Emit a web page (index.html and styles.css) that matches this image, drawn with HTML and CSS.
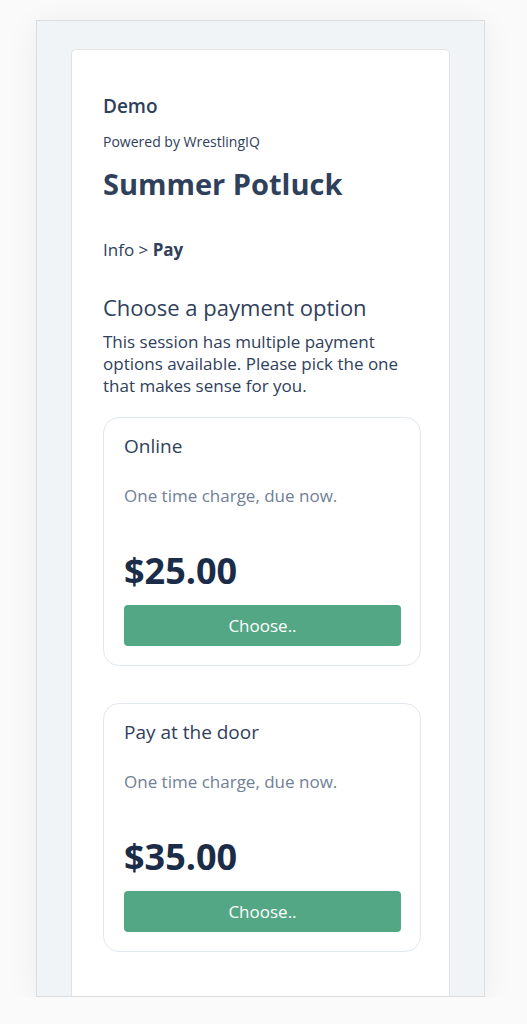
FILE: index.html
```html
<!DOCTYPE html>
<html lang="en">
<head>
  <meta charset="UTF-8">
  <meta name="viewport" content="width=device-width, initial-scale=1.0">
  <title>Summer Potluck - Pay</title>
  <link rel="stylesheet" href="styles.css">
</head>
<body>
  <div class="frame">
    <div class="page">
      <!-- Header -->
      <div class="org">Demo</div>
      <div class="powered">Powered by WrestlingIQ</div>
      <h1>Summer Potluck</h1>

      <div class="crumbs">Info &gt; <strong>Pay</strong></div>

      <h2>Choose a payment option</h2>
      <p class="intro">This session has multiple payment options available. Please pick the one that makes sense for you.</p>

      <!-- Payment options -->
      <div class="options">
        <div class="option">
          <div class="option-name">Online</div>
          <div class="option-desc">One time charge, due now.</div>
          <div class="price">$25.00</div>
          <button class="choose">Choose..</button>
        </div>
        <div class="option">
          <div class="option-name">Pay at the door</div>
          <div class="option-desc">One time charge, due now.</div>
          <div class="price">$35.00</div>
          <button class="choose">Choose..</button>
        </div>
      </div>
    </div>
  </div>
</body>
</html>
```

FILE: styles.css
```css
body {
  margin: 0;
  padding: 20px 0 0 36px;
  background-color: #fafafa;
  font-family: "Open Sans", Arial, sans-serif;
  color: #2f405b;
}
.frame {
  width: 447px;
  height: 975px;
  background-color: #f1f4f7;
  border: 1px solid #dcdcdc;
  box-shadow: 0 4px 30px rgba(0, 0, 0, 0.06);
  overflow: hidden;
}
.page {
  margin: 28px 34px 0 34px;
  min-height: 1000px;
  background-color: #fff;
  border: 1px solid #e2e2e2;
  border-radius: 5px;
  padding: 42px 28px 0 31px;
}
.org {
  font-size: 19px;
  font-weight: 600;
  line-height: 28px;
}
.powered {
  margin-top: 12px;
  font-size: 14px;
  line-height: 20px;
}
h1 {
  margin: 13px 0 0;
  font-size: 29px;
  font-weight: 700;
  line-height: 38px;
}
.crumbs {
  margin-top: 35px;
  font-size: 17px;
  line-height: 24px;
}
h2 {
  margin: 30px 0 0;
  font-size: 22px;
  font-weight: 400;
  line-height: 30px;
}
.intro {
  margin: 9px 0 0;
  font-size: 17px;
  line-height: 22px;
}
.options {
  display: flex;
  flex-direction: column;
  gap: 37px;
  margin-top: 20px;
}
.option {
  border: 1px solid #e2e8f0;
  border-radius: 16px;
  padding: 14px 19px 19px 20px;
}
.option-name {
  font-size: 19px;
  line-height: 28px;
}
.option-desc {
  margin-top: 24px;
  font-size: 17px;
  line-height: 24px;
  color: #718096;
}
.price {
  margin-top: 41px;
  font-size: 36px;
  font-weight: 700;
  line-height: 44px;
  color: #1a2c48;
}
.choose {
  display: block;
  width: 100%;
  height: 41px;
  margin-top: 12px;
  background-color: #53a784;
  color: #fff;
  border: none;
  border-radius: 4px;
  font-family: inherit;
  font-size: 17px;
}
```
